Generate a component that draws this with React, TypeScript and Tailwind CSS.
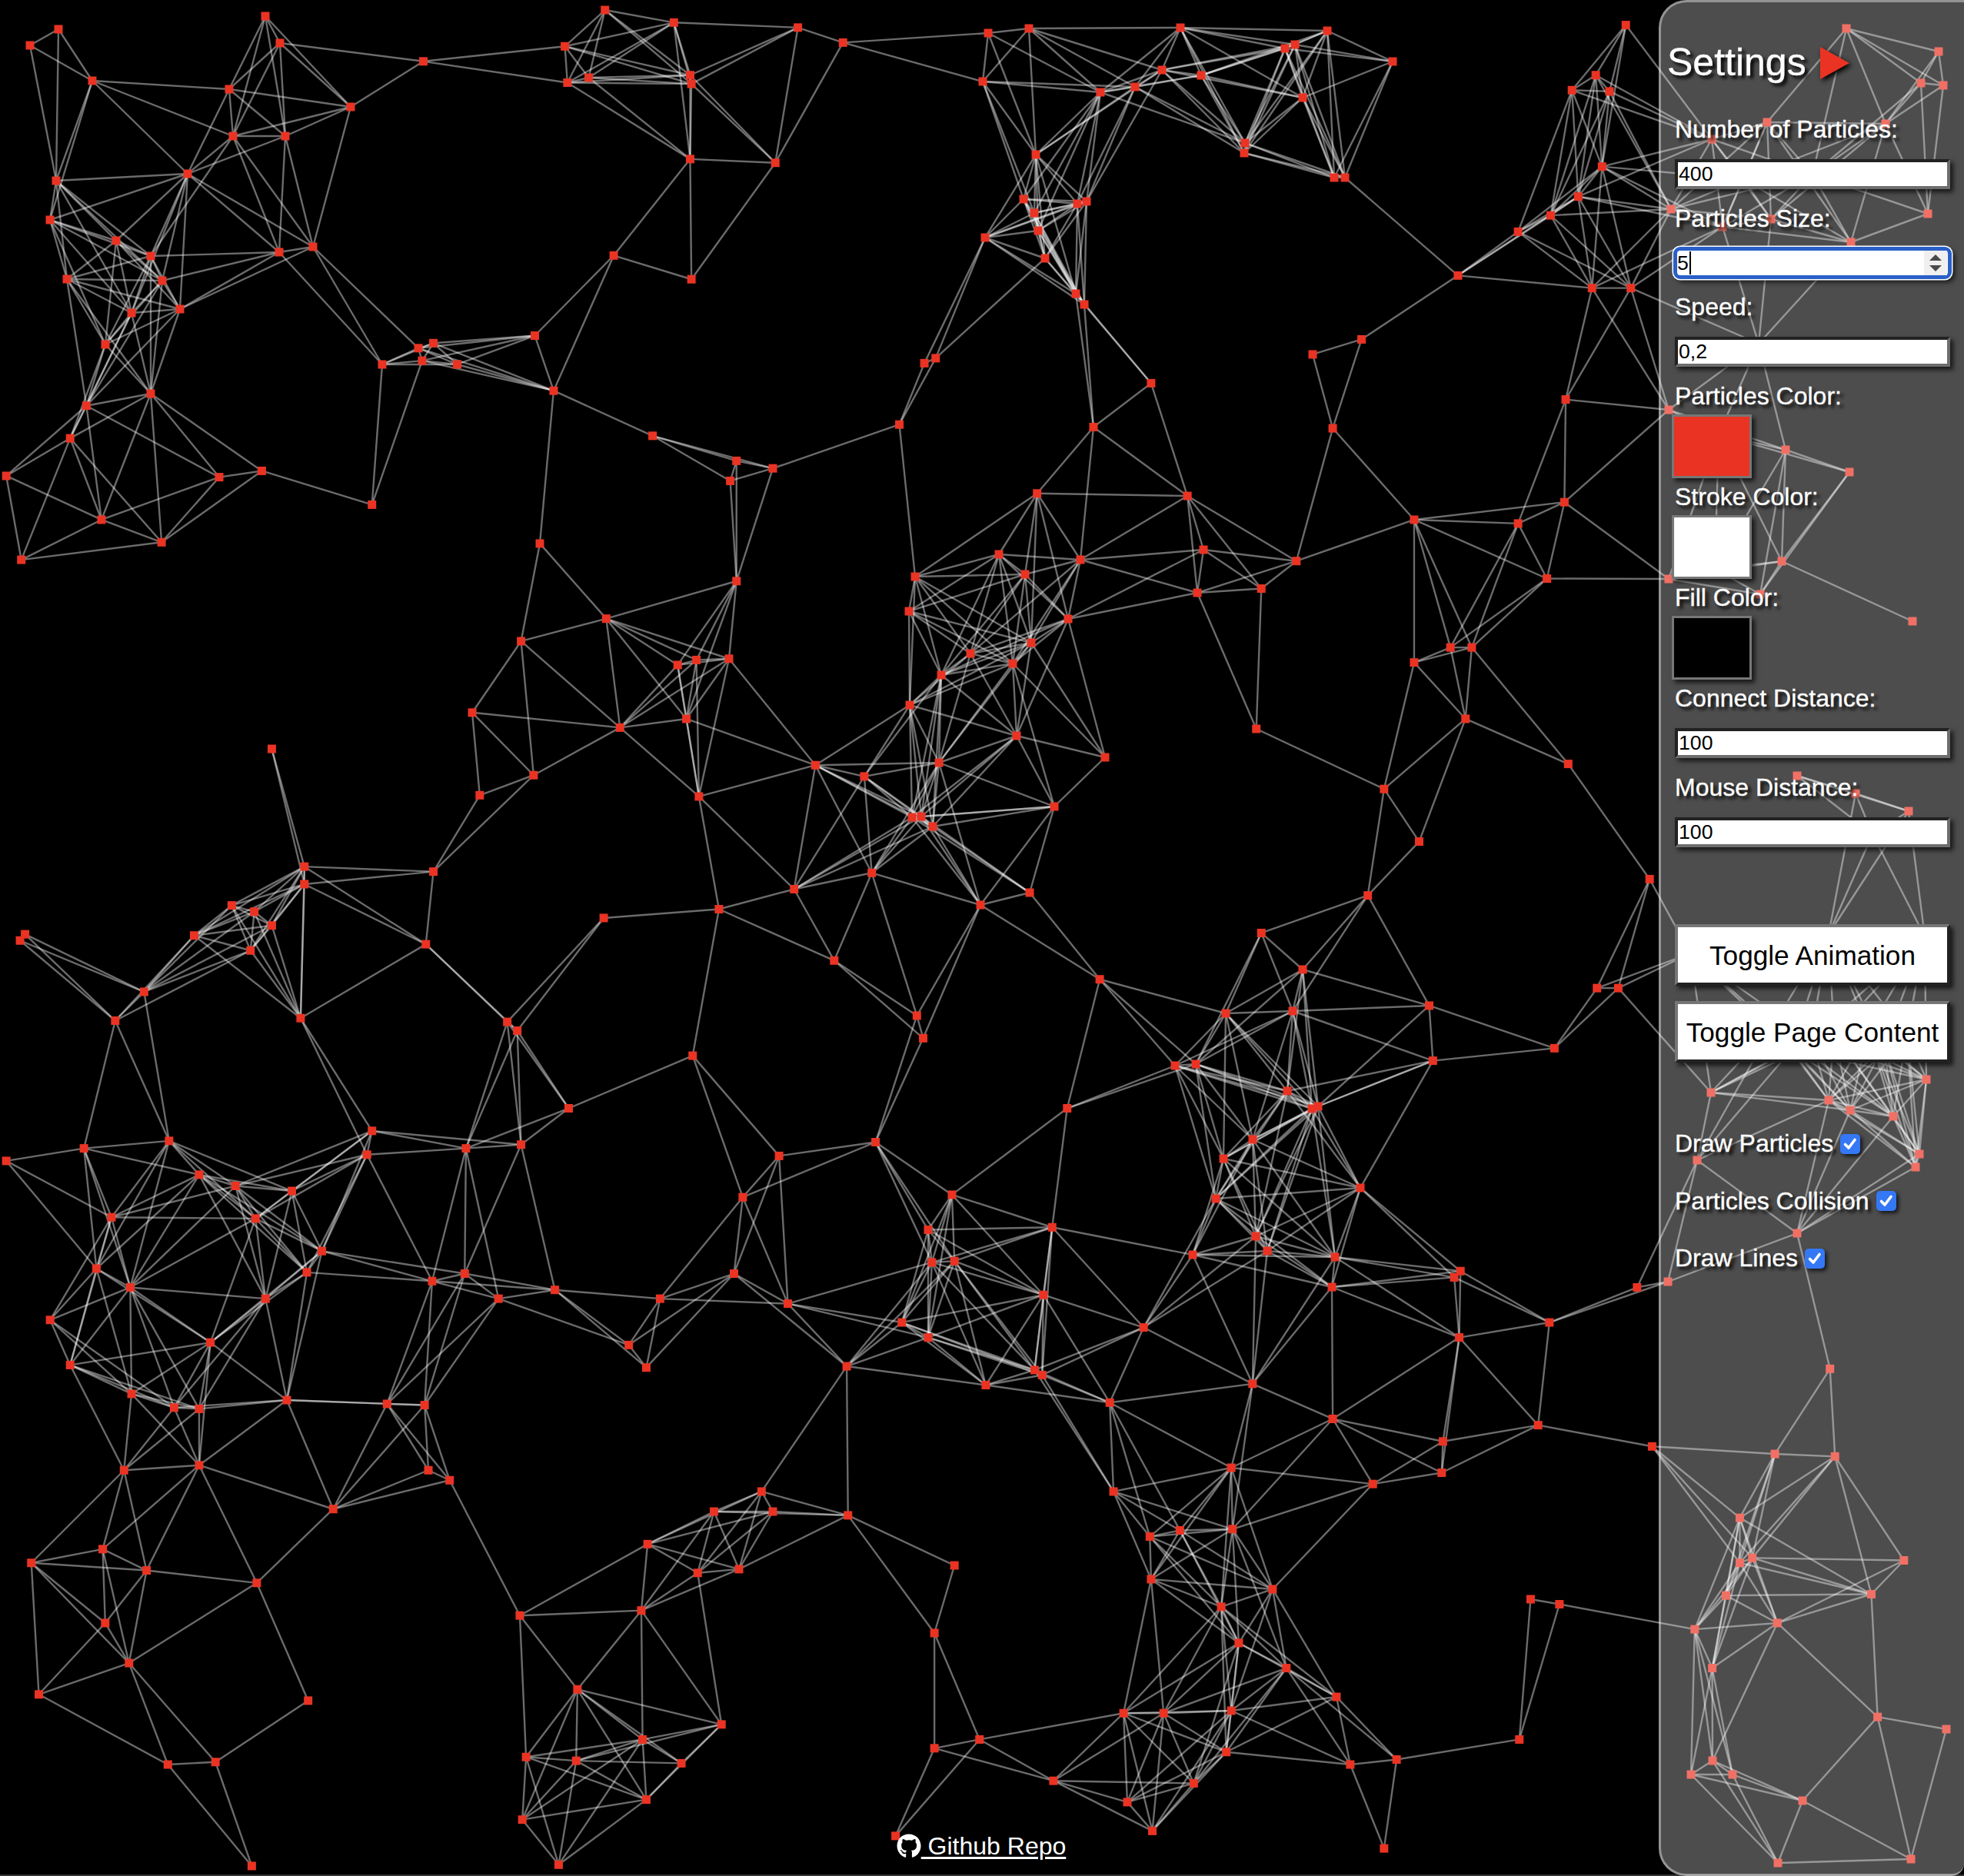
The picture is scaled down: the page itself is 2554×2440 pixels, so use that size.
import { FaGithub } from "react-icons/fa";

const WIDTH = 2554;
const HEIGHT = 2438;
const CONNECT_DISTANCE = 200;
const PARTICLE_SIZE = 11;
const SCALE = 2554 / 1568;

// read off the shrunk picture, scaled up below
const roughPoints = `69,324 56,350 5,380 81,415 17,447 129,433 175,381 209,376 297,403
334,278 337,288 346,274 365,291 427,268 442,312
338,49 451,37 453,66 483,8 470,62 538,18 551,60 552,67 637,22 673,34 551,127 619,130 490,204 552,223
1164,220 1212,185 1238,172 1260,157 1279,133 1255,72 1274,60 1285,73 1298,20 1271,230 1302,230
1250,319 1249,401 1235,462 1212,418 1129,415 1035,448 1064,342 1048,283 1087,271 919,306 873,341 738,290 747,286 718,339
617,374 588,368 583,384 521,348 588,464 431,434 828,394 948,396 1007,470 1003,582
690,620 651,611 696,697 634,710
484,494 416,512 541,531 556,527 582,526 495,581 548,574 377,569 426,619 383,635 558,636
1129,529 1158,517 1175,517 1170,574 1252,610 1105,630 1133,672 1092,715
217,598 243,692 243,706 346,696 340,754 185,723 203,728 217,739 155,747 200,759 115,792 92,815 240,813 20,746 16,751
405,816 413,823 454,885 482,733 574,726 666,767 732,811 737,829 553,843
878,782 1007,745 1141,803 1144,847 1241,837 1275,789 1292,789 1317,702 852,885 699,912 622,923 593,956 840,980 760,954 741,982 744,1008 762,1007
5,927 67,917 135,911 159,938 188,947 233,951 297,903 293,922 372,917 416,914 89,972 204,973 257,999 245,1016 77,1013 104,1028 212,1037 40,1054 168,1072 56,1090 105,1113 139,1124 159,1125 229,1118 309,1121 339,1122
345,1023 371,1017 398,1037 443,1030 502,1074 516,1092 527,1037 586,1017 629,1041 676,1091
720,1056 741,1068 787,1106 833,1034 826,1094 832,1098 913,1060 886,1120 1000,1105 1161,1020 1166,1015 1165,1068 1237,1056 1307,1028 1064,1133 1228,1138 1152,1151 1151,1176 1096,1185 983,1172 889,1191
99,1174 159,1170 342,1174 359,1182 266,1205 205,1264 25,1248 82,1237 117,1254 84,1296 103,1328 31,1353 134,1409 172,1407 246,1358 201,1490
415,1290 512,1286 517,1233 570,1207 608,1191 617,1207 677,1210 557,1256 590,1253 762,1250 746,1304 782,1389 746,1396 576,1377 461,1349 420,1403 460,1406 513,1389 544,1408 516,1437 417,1453 446,1489 715,1466
918,1227 942,1222 984,1221 919,1261 1016,1269 975,1283 989,1312 1027,1332 1067,1355 897,1368 929,1368 983,1366 979,1399 841,1422 900,1439 953,1424 920,1462 1078,1409 1115,1405 1105,1476 1213,1389 1222,1277 1245,1281 1319,1155
1461,1093 1417,1161 1465,1163 1389,1212 1399,1244 1389,1248 1378,1274 1520,1246 1494,1273 1419,1296 1353,1301 1367,1332 1499,1371`;

// read off zoomed crops, already in full pixels
const exactPoints = `39,59 76,38 120,105 73,235 65,286 151,313 196,333 87,363 211,365 171,407 234,402 137,448 196,512 298,116 345,21 364,56 456,139 303,177 371,177 244,226 407,321 363,328 497,474
1299,721 1405,728 1333,747 1190,750 1182,795 1389,805 1341,836 1262,850 1317,863 1224,878 1183,917 1322,957 1437,985 1221,992 1371,1049 1186,1063 1198,1062 1213,1075 1339,1161 1275,1177 1565,715 1557,771
1285,43 1338,37 1535,36 1726,40 1684,58 1671,63 1811,80 1278,106 1511,91 1562,98 1476,113 1431,120 1694,127 1619,186 1618,199 1347,201 1735,231 1749,231 1331,259 1401,265 1413,262 1345,277 1350,300 1281,309 1359,336 1399,382 1410,396
1694,1261 1594,1318 1681,1315 1528,1386 1555,1384 1674,1419 1714,1439 1706,1442 1629,1482 1591,1507 1769,1545 1581,1559 1633,1608 1648,1627 1551,1632 1736,1635 1732,1674
2401,37 2521,67 2498,108 2527,111 2298,159 2226,181 2173,272 2303,285 2240,295 2407,315 2507,278 2452,161 2267,233 2357,227
2170,533 2322,585 2405,614 2317,730 2170,753 2289,773 2487,808 2287,447 2235,565 2230,740
2337,1009 2413,1032 2482,1055 2435,1085 2378,1215 2503,1218 2198,1240 2305,1335 2355,1350 2385,1345 2430,1340 2450,1360 2480,1345 2330,1365
2225,1421 2378,1431 2406,1444 2462,1452 2505,1404 2496,1501 2491,1518 2207,1509 2337,1604 2169,1667
2531,2249 2227,2290 2199,2308 2253,2308 2344,2342 2312,2423 2485,2418`;

const parsePoints = (text: string, scale: number) =>
    text
        .trim()
        .split(/\s+/)
        .map((pair) => {
            const [x, y] = pair.split(",").map(Number);
            return { x: x * scale, y: y * scale };
        });

const particles = [...parsePoints(roughPoints, SCALE), ...parsePoints(exactPoints, 1)];

const connections: { x1: number; y1: number; x2: number; y2: number }[] = [];
particles.forEach((a, i) => {
    particles.slice(i + 1).forEach((b) => {
        if (Math.hypot(a.x - b.x, a.y - b.y) < CONNECT_DISTANCE) {
            connections.push({ x1: a.x, y1: a.y, x2: b.x, y2: b.y });
        }
    });
});

const panelText = "text-white [text-shadow:4px_4px_4px_#000] [-webkit-text-stroke:0.35px_#fff]";

function Label({ children }: { children: string }) {
    return <div className={`ml-[18px] h-[37px] text-[32px] leading-[37px] ${panelText}`}>{children}</div>;
}

function TextInput({ value }: { value: string }) {
    return (
        <input
            type="text"
            readOnly
            value={value}
            className="ml-[18px] mt-[20px] mb-[20px] box-border h-[39px] w-[358px] border-4 border-t-[#222222] border-l-[#222222] border-r-[#6e6e6e] border-b-[#6e6e6e] bg-white px-[1px] text-[26.67px] leading-[31px] text-black shadow-[4px_4px_6px_rgba(0,0,0,0.7)] outline-none"
        />
    );
}

function FocusedNumberInput({ value }: { value: string }) {
    return (
        <div className="ml-[16px] mt-[18px] mb-[18px] box-border flex h-[42px] w-[362px] items-center rounded-[9px] border-[5px] border-[#2a5fc8] bg-white pr-[1px] text-[26.67px] text-black shadow-[0_0_0_1.5px_#fff,4px_4px_6px_rgba(0,0,0,0.7)]">
            <span className="leading-[30px]">{value}</span>
            <span className="ml-[1px] h-[30px] w-[2px] bg-black" />
            <span className="ml-auto flex h-full w-[30px] flex-col items-center justify-center gap-[6px] bg-[#efefef]">
                <svg width="16" height="8" viewBox="0 0 16 8">
                    <polygon points="8,0 16,8 0,8" fill="#4a4a4a" />
                </svg>
                <svg width="16" height="8" viewBox="0 0 16 8">
                    <polygon points="0,0 16,0 8,8" fill="#4a4a4a" />
                </svg>
            </span>
        </div>
    );
}

function Swatch({ className }: { className: string }) {
    return (
        <div
            className={`ml-[14px] mt-[5px] mb-[6px] box-border h-[83px] w-[104px] border-[3px] border-[#777777] shadow-[4px_4px_6px_rgba(0,0,0,0.7)] ${className}`}
        />
    );
}

function PanelButton({ children }: { children: string }) {
    return (
        <button className="ml-[18px] mb-[20px] box-border h-[80px] w-[358px] border-4 border-t-[#767676] border-l-[#767676] border-r-[#222222] border-b-[#222222] bg-white p-0 pt-[2px] text-center text-[35.2px] text-black shadow-[4px_4px_6px_rgba(0,0,0,0.7)]">
            {children}
        </button>
    );
}

function CheckRow({ label }: { label: string }) {
    return (
        <div className={`ml-[18px] mb-[37.5px] flex h-[37px] items-center gap-[9px] text-[32px] leading-[37px] ${panelText}`}>
            <span>{label}</span>
            <span className="flex h-[26px] w-[26px] items-center justify-center rounded-[5px] bg-[#3478f6] shadow-[3px_3px_5px_rgba(0,0,0,0.7)]">
                <svg width="20" height="20" viewBox="0 0 20 20" fill="none">
                    <path d="M3.5 10.5 L8 15 L16 4.5" stroke="#fff" strokeWidth="3.6" strokeLinecap="round" strokeLinejoin="round" />
                </svg>
            </span>
        </div>
    );
}

function ParticleCanvas() {
    return (
        <svg width={WIDTH} height={HEIGHT} viewBox={`0 0 ${WIDTH} ${HEIGHT}`} className="absolute top-0 left-0 block blur-[0.7px]">
            {connections.map((line, i) => (
                <line key={i} {...line} stroke="#fff" strokeOpacity="0.42" strokeWidth="2.4" />
            ))}
            {particles.map((p, i) => (
                <rect
                    key={i}
                    x={p.x - PARTICLE_SIZE / 2}
                    y={p.y - PARTICLE_SIZE / 2}
                    width={PARTICLE_SIZE}
                    height={PARTICLE_SIZE}
                    fill="#ea3323"
                />
            ))}
        </svg>
    );
}

export default function App() {
    return (
        <div className="relative h-[2440px] w-full overflow-hidden bg-[#333333] font-['Liberation_Sans',Arial,sans-serif]">
            <div className="absolute top-0 left-0 h-[2438px] w-full bg-black" />
            <ParticleCanvas />

            <a className="absolute top-[2383px] left-0 flex w-full justify-center text-[32px] leading-[37px] text-white">
                <span className="-translate-x-[1px] underline decoration-[3px] underline-offset-[3px]">
                    <FaGithub className="inline-block h-[32px] w-[32px] align-[-5px]" /> Github Repo
                </span>
            </a>

            <aside className="absolute top-0 right-0 box-border h-[2440px] w-[397px] rounded-l-[36px] rounded-br-[16px] border-[3px] border-r-0 border-white/40 bg-white/30 pt-[51px]">
                <div className={`ml-[8px] mb-[41px] flex h-[55px] items-center gap-[18px] text-[50px] leading-[55px] ${panelText}`}>
                    <span>Settings</span>
                    <svg width="38" height="42" viewBox="0 0 38 42" className="drop-shadow-[3px_3px_3px_#000]">
                        <polygon points="0,0 38,21 0,42" fill="#ea3323" />
                    </svg>
                </div>

                <Label>Number of Particles:</Label>
                <TextInput value="400" />
                <Label>Particles Size:</Label>
                <FocusedNumberInput value="5" />
                <Label>Speed:</Label>
                <TextInput value="0,2" />
                <Label>Particles Color:</Label>
                <Swatch className="bg-[#ea3323]" />
                <Label>Stroke Color:</Label>
                <Swatch className="bg-white" />
                <Label>Fill Color:</Label>
                <Swatch className="bg-black" />
                <Label>Connect Distance:</Label>
                <TextInput value="100" />
                <Label>Mouse Distance:</Label>
                <TextInput value="100" />

                <div className="h-[80px]" />
                <PanelButton>Toggle Animation</PanelButton>
                <PanelButton>Toggle Page Content</PanelButton>

                <div className="h-[67px]" />
                <CheckRow label="Draw Particles" />
                <CheckRow label="Particles Collision" />
                <CheckRow label="Draw Lines" />
            </aside>
        </div>
    );
}
